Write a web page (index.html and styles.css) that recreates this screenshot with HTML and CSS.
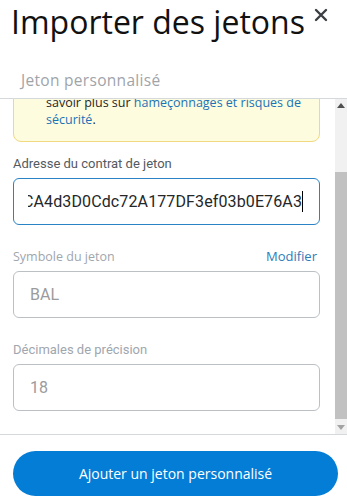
FILE: index.html
```html
<!DOCTYPE html>
<html lang="fr">
<head>
<meta charset="utf-8">
<title>Importer des jetons</title>
<link rel="stylesheet" href="styles.css">
</head>
<body>
<div class="popup">
  <header class="header">
    <h1 class="title">Importer des jetons</h1>
    <button class="close" aria-label="Fermer">
      <svg width="14" height="14" viewBox="0 0 14 14"><path d="M2 2 L12 12 M12 2 L2 12" stroke="#3b3f43" stroke-width="2.4" stroke-linecap="round"/></svg>
    </button>
  </header>
  <div class="tab">Jeton personnalisé</div>
  <div class="scroll-area">
    <div class="viewport" id="viewport">
      <div class="content">
        <div class="warning">
          <p>Tout le monde peut créer un jeton, y compris créer de fausses versions de jetons existants. En<br>savoir plus sur <a href="#">hameçonnages et risques de<br>sécurité</a>.</p>
        </div>
        <label class="label dark">Adresse du contrat de jeton</label>
        <div class="input focused"><span class="addr-clip"><span class="addr">0xba100000625a3754423978a60c9317c58a424e3D<span>CA4d3D0Cdc72A177DF3ef03b0E76A3</span></span></span><span class="caret"></span></div>
        <div class="label-row">
          <label class="label light">Symbole du jeton</label>
          <a class="edit" href="#">Modifier</a>
        </div>
        <div class="input disabled">BAL</div>
        <label class="label light2">Décimales de précision</label>
        <div class="input disabled">18</div>
      </div>
    </div>
    <div class="scrollbar" aria-hidden="true">
      <div class="sb-btn"><svg width="8" height="5" viewBox="0 0 8 5"><path d="M0 5 L4 0 L8 5 Z" fill="#505050"/></svg></div>
      <div class="sb-track"><div class="sb-thumb"></div></div>
      <div class="sb-btn"><svg width="8" height="5" viewBox="0 0 8 5"><path d="M0 0 L4 5 L8 0 Z" fill="#a3a3a3"/></svg></div>
    </div>
  </div>
  <footer class="footer">
    <button class="primary">Ajouter un jeton personnalisé</button>
  </footer>
</div>
<script src="script.js"></script>
</body>
</html>
```
FILE: script.js
```js
var v = document.getElementById('viewport');
v.scrollTop = v.scrollHeight;
```
FILE: styles.css
```css
html, body {
  margin: 0;
  padding: 0;
  background: #fff;
}
body {
  width: 347px;
  height: 502px;
  overflow: hidden;
  font-family: "Open Sans", sans-serif;
  color: #24272a;
}
.popup {
  display: flex;
  flex-direction: column;
  height: 502px;
}
.header {
  display: flex;
  justify-content: space-between;
  align-items: flex-start;
  padding: 0 18px 0 11px;
  height: 58px;
}
.title {
  margin: 0;
  font-weight: 400;
  font-size: 32px;
  line-height: 32px;
  padding-top: 6px;
  color: #111;
  white-space: nowrap;
}
.close {
  border: 0;
  background: none;
  padding: 0;
  margin-top: 7px;
  width: 16px;
  height: 16px;
  display: flex;
  align-items: center;
  justify-content: center;
}
.tab {
  padding: 12px 0 0 21px;
  height: 28px;
  font-size: 15.5px;
  letter-spacing: 0.3px;
  line-height: 20px;
  color: #9fa4a9;
}
.scroll-area {
  display: flex;
  height: 335px;
  border-top: 1px solid #d6d9dc;
  border-bottom: 1px solid #d6d9dc;
}
.viewport {
  flex: 1;
  overflow: hidden;
}
.scrollbar {
  width: 12px;
  display: flex;
  flex-direction: column;
  background: #f1f1f1;
}
.sb-btn {
  height: 13px;
  display: flex;
  align-items: center;
  justify-content: center;
}
.sb-track {
  flex: 1;
  display: flex;
  flex-direction: column;
  padding-top: 60px;
}
.sb-thumb {
  height: 247px;
  background: #c1c1c1;
}
.content {
  padding: 16px 15px 23px 13px;
  display: flex;
  flex-direction: column;
}
.warning {
  background: #fefcde;
  border: 1px solid #f0d980;
  border-radius: 8px;
  padding: 8px 12px 13px 32px;
  margin-bottom: 14px;
}
.warning p {
  margin: 0;
  font-size: 12.5px;
  line-height: 17px;
  color: #24272a;
}
.warning a {
  color: #1a73b8;
  text-decoration: none;
}
.label {
  display: block;
  font-family: Roboto, sans-serif;
  font-size: 13px;
  line-height: 16px;
  margin-bottom: 6px;
}
.label.dark {
  color: #535a61;
}
.label.light {
  color: #9fa6ae;
  font-family: "Open Sans", sans-serif;
  font-size: 12.5px;
  margin-bottom: 0;
}
.label.light2 {
  color: #9fa6ae;
  margin-top: 24px;
  margin-bottom: 6px;
}
.label-row {
  display: flex;
  justify-content: space-between;
  align-items: baseline;
  margin-top: 23px;
  margin-bottom: 6px;
  padding-right: 3px;
  line-height: 16px;
}
.edit {
  font-size: 13px;
  color: #2f7cb8;
  text-decoration: none;
}
.input {
  box-sizing: border-box;
  height: 47px;
  border: 1px solid #bbc0c5;
  border-radius: 6px;
  font-family: Roboto, sans-serif;
  font-size: 16px;
  display: flex;
  align-items: center;
  padding: 0 16px;
  overflow: hidden;
}
.input.focused {
  border-color: #2a83c4;
  padding: 0 16px 0 14px;
  color: #24272a;
  white-space: nowrap;
}
.addr-clip {
  flex: 1;
  min-width: 0;
  overflow: hidden;
  display: flex;
  justify-content: flex-end;
}
.addr {
  white-space: nowrap;
  flex: none;
  letter-spacing: 0.12px;
}
.caret {
  width: 1px;
  height: 21px;
  background: #000;
  flex: none;
}
.input.disabled {
  color: #9b9b9b;
}
.footer {
  flex: 1;
  display: flex;
  align-items: flex-start;
  padding: 16px 9px 0 13px;
}
.primary {
  width: 100%;
  height: 45px;
  border: 0;
  border-radius: 23px;
  background: #037dd6;
  color: #fff;
  font-family: "Open Sans", sans-serif;
  font-size: 14px;
  cursor: pointer;
}
```
